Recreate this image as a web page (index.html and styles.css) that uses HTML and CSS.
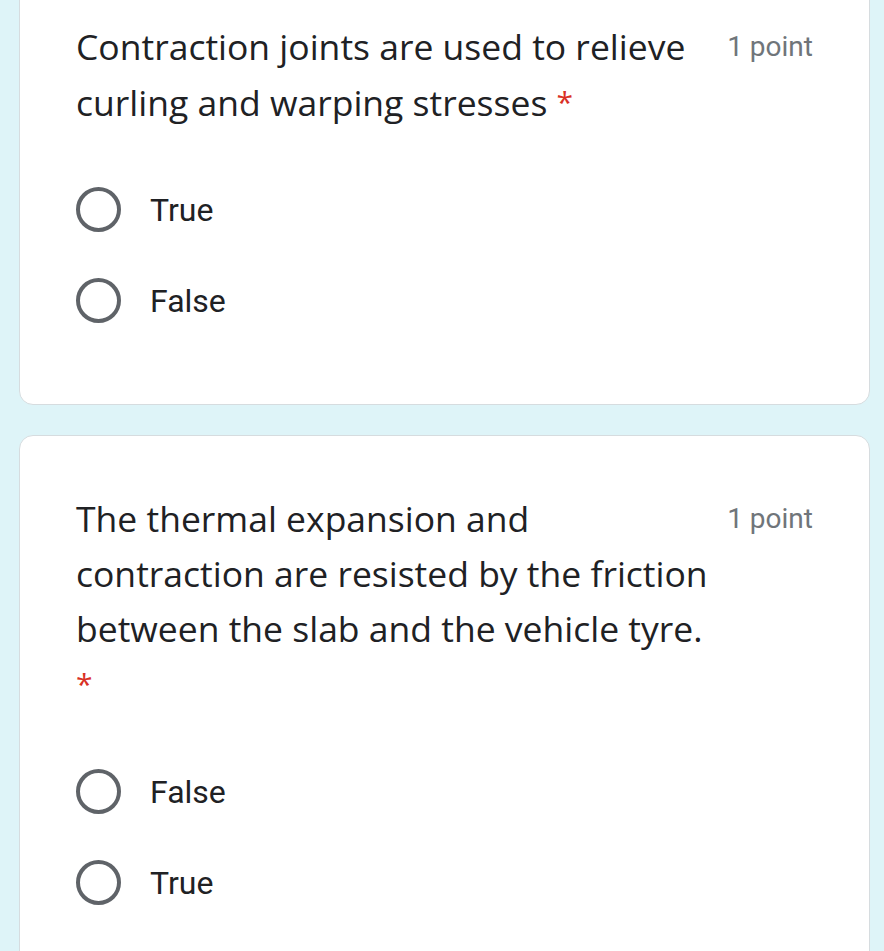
FILE: index.html
```html
<!DOCTYPE html>
<html lang="en">
<head>
<meta charset="utf-8">
<title>Quiz</title>
<link rel="stylesheet" href="styles.css">
</head>
<body>
<div class="page">
  <section class="card card-first">
    <div class="q-head">
      <div class="q-title">Contraction joints are used to relieve<br>curling and warping stresses <span class="req">*</span></div>
      <div class="q-points">1 point</div>
    </div>
    <div class="options">
      <label class="option"><span class="radio"></span><span class="opt-text">True</span></label>
      <label class="option"><span class="radio"></span><span class="opt-text">False</span></label>
    </div>
  </section>
  <section class="card">
    <div class="q-head">
      <div class="q-title">The thermal expansion and<br>contraction are resisted by the friction<br>between the slab and the vehicle tyre.<br><span class="req">*</span></div>
      <div class="q-points">1 point</div>
    </div>
    <div class="options">
      <label class="option"><span class="radio"></span><span class="opt-text">False</span></label>
      <label class="option"><span class="radio"></span><span class="opt-text">True</span></label>
    </div>
  </section>
</div>
</body>
</html>
```

FILE: styles.css
```css
* { box-sizing: border-box; }
html, body {
  margin: 0;
  padding: 0;
  background: #def4f8;
  height: 100%;
  overflow: hidden;
}
.page {
  padding: 0 14px 0 19px;
  display: flex;
  flex-direction: column;
  gap: 30px;
}
.card {
  background: #ffffff;
  border: 1px solid #d6dcdf;
  border-radius: 14px;
  padding: 55px 56px 58px 56px;
}
.card-first {
  margin-top: -37px;
}
.q-head {
  display: flex;
  align-items: flex-start;
}
.q-title {
  flex: 1;
  min-width: 0;
  font-family: "Open Sans", sans-serif;
  font-size: 35.5px;
  line-height: 55px;
  color: #202124;
  white-space: nowrap;
}
.req {
  color: #d93025;
  font-size: 30px;
  vertical-align: 3px;
}
.q-points {
  margin-left: 16px;
  font-family: Roboto, sans-serif;
  font-size: 28px;
  line-height: 55px;
  color: #70757a;
  white-space: nowrap;
}
.options {
  margin-top: 34px;
  display: flex;
  flex-direction: column;
}
.option {
  display: flex;
  align-items: center;
  height: 91px;
}
.radio {
  width: 45px;
  height: 45px;
  border: 4px solid #5f6368;
  border-radius: 50%;
  flex: none;
}
.opt-text {
  margin-left: 29px;
  font-family: Roboto, sans-serif;
  font-size: 32px;
  color: #202124;
}
```
